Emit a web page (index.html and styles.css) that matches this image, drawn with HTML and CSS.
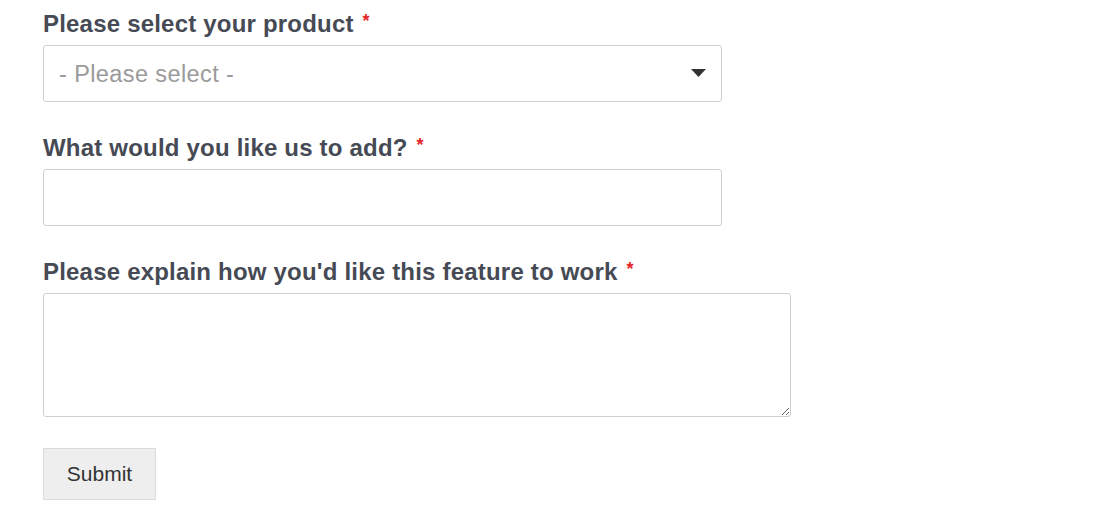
FILE: index.html
```html
<!DOCTYPE html>
<html lang="en">
<head>
<meta charset="utf-8">
<title>Feature request</title>
<link rel="stylesheet" href="styles.css">
</head>
<body>
<form class="form">
  <div class="field">
    <label class="label" for="product">Please select your product <span class="req">*</span></label>
    <div class="select-wrap">
      <select id="product" class="control select">
        <option>- Please select -</option>
      </select>
      <svg class="arrow" width="15" height="8" viewBox="0 0 15 8"><path d="M0 0 H15 L7.5 8 Z" fill="#333"/></svg>
    </div>
  </div>
  <div class="field">
    <label class="label" for="add">What would you like us to add? <span class="req">*</span></label>
    <input id="add" class="control input" type="text">
  </div>
  <div class="field">
    <label class="label" for="explain">Please explain how you'd like this feature to work <span class="req">*</span></label>
    <textarea id="explain" class="control textarea"></textarea>
  </div>
  <button type="button" class="submit">Submit</button>
</form>
</body>
</html>
```
FILE: styles.css
```css
html, body {
  margin: 0;
  background: #fff;
}
body {
  padding: 9px 0 0 43px;
  font-family: "Liberation Sans", Arial, sans-serif;
}
.form {
  display: flex;
  flex-direction: column;
  align-items: flex-start;
}
.field {
  display: flex;
  flex-direction: column;
  margin-bottom: 31px;
}
.label {
  display: block;
  font-size: 24px;
  line-height: 30px;
  height: 30px;
  font-weight: bold;
  letter-spacing: 0.2px;
  color: #464a54;
  margin-bottom: 6px;
}
.req {
  color: #e3262a;
  font-size: 18px;
  line-height: 0;
  vertical-align: 5px;
  letter-spacing: 0;
  margin-left: 2px;
}
.control {
  box-sizing: border-box;
  border: 1px solid #cfcfcf;
  border-radius: 3px;
  background: #fff;
  font-family: "Liberation Sans", Arial, sans-serif;
  margin: 0;
}
.select-wrap {
  position: relative;
  width: 679px;
}
.select {
  -webkit-appearance: none;
  appearance: none;
  width: 679px;
  height: 57px;
  padding: 0 0 0 15px;
  font-size: 23.5px;
  letter-spacing: 0.4px;
  color: #9a9a9a;
  outline: none;
}
.arrow {
  position: absolute;
  right: 16px;
  top: 24px;
  pointer-events: none;
}
.input {
  width: 679px;
  height: 57px;
  font-size: 20px;
  padding: 0 15px;
}
.textarea {
  display: block;
  width: 748px;
  height: 124px;
  resize: both;
  font-size: 20px;
  padding: 10px 15px;
}
.submit {
  margin-top: 0;
  width: 113px;
  height: 52px;
  box-sizing: border-box;
  background: #eeeeee;
  border: 1px solid #dadada;
  border-radius: 0;
  font-family: "Liberation Sans", Arial, sans-serif;
  font-size: 21px;
  color: #333;
  padding: 0;
}
```
